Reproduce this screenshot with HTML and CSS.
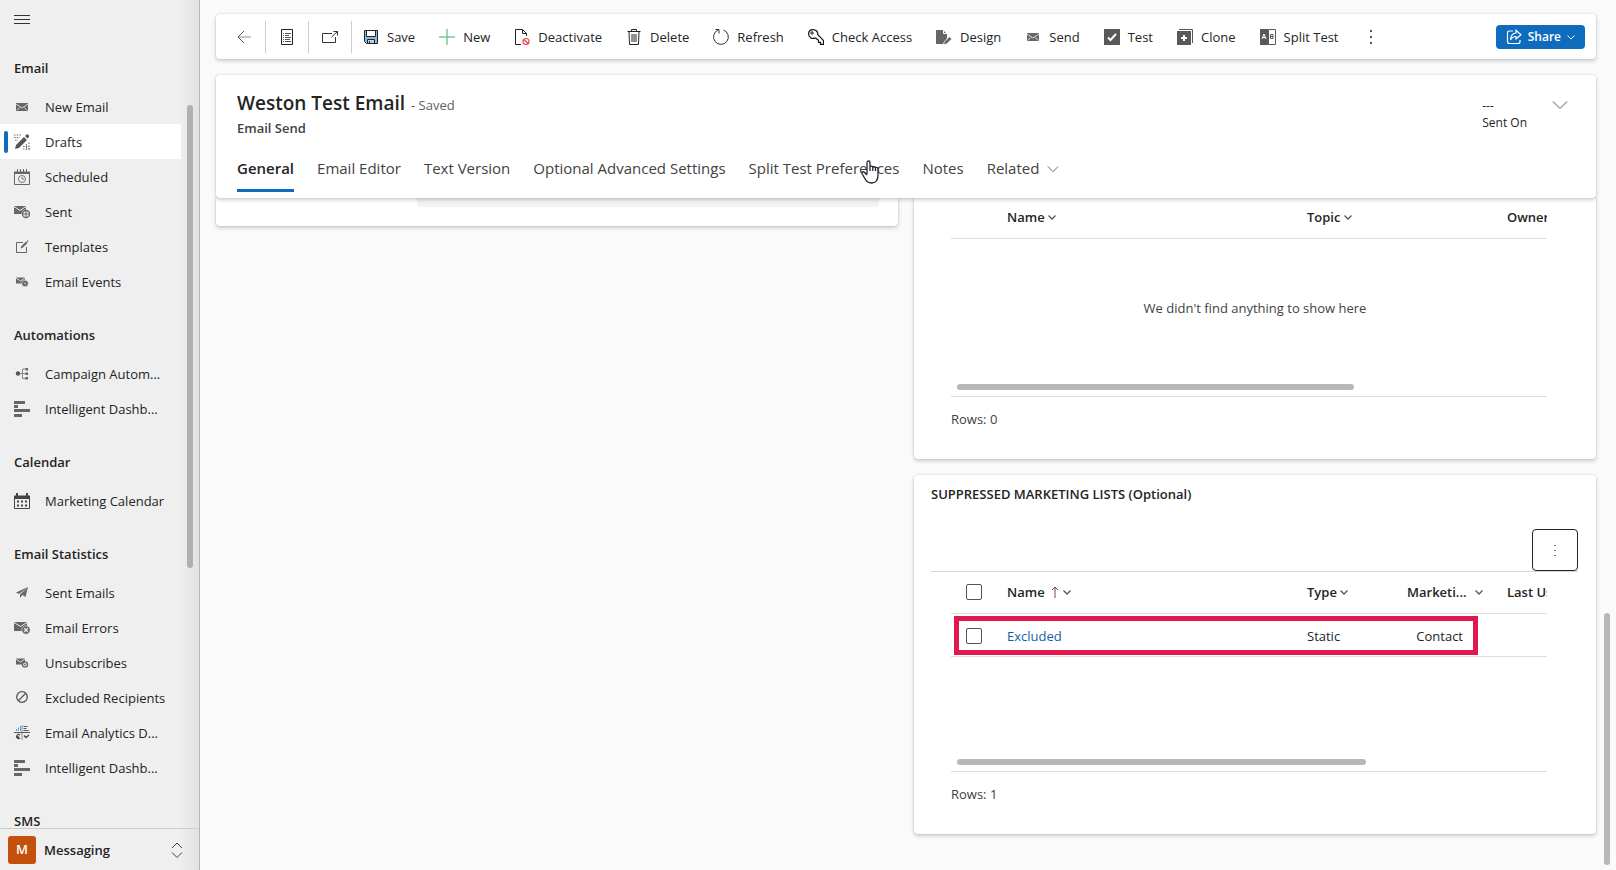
FILE: index.html
```html
<!DOCTYPE html>
<html lang="en">
<head>
  <meta charset="UTF-8">
  <meta name="viewport" content="width=device-width, initial-scale=1.0">
  <title>Weston Test Email - Email Send</title>
  <link rel="stylesheet" href="styles.css">
</head>
<body>
  <!-- Shared icons -->
  <svg class="sprite" aria-hidden="true">
    <symbol id="mail" viewBox="0 0 16 16">
      <path fill="#666" d="M2 4h12v8H2z"/>
      <path fill="none" stroke="#ddd" d="M2 5l6 4 6-4M3 11.500l2.500-3M13 11.500l-2.500-3"/>
    </symbol>
    <symbol id="bars" viewBox="0 0 16 16">
      <path fill="#666" d="M0 0h11v3H0zM0 4h4v3H0zM0 8h16v3H0zM0 13h8v3H0z"/>
    </symbol>
    <symbol id="chevron" viewBox="0 0 16 16">
      <path fill="none" stroke="currentColor" d="M1 4.500l7 7 7-7"/>
    </symbol>
    <symbol id="chevron-small" viewBox="0 0 8 8">
      <path fill="none" stroke="currentColor" d="M.5 2.500L4 6l3.500-3.500"/>
    </symbol>
    <symbol id="caret" viewBox="0 0 8 8">
      <path fill="none" stroke="#555" stroke-width="1.300" d="M.5 2.500L4 6l3.500-3.500"/>
    </symbol>
  </svg>

  <nav class="sidebar">
    <button class="menu-btn" aria-label="Menu">
      <svg class="icon" viewBox="0 0 16 16"><path stroke="#333" d="M0 3.500h16M0 7.500h16M0 11.500h16"/></svg>
    </button>

    <div class="nav-scroll">
      <h2>Email</h2>
      <a href="#"><svg class="icon"><use href="#mail"/></svg>New Email</a>
      <a href="#" class="active">
        <svg class="icon" viewBox="0 0 16 16">
          <path fill="#555" d="M1 15l1-4 8-8 3 3-8 8zM11 2l1.500-1.500c1-1 3.500 1.500 2.500 2.500L13.500 4.500z"/>
          <path stroke="#666" stroke-dasharray="1.500 1.200" d="M0 1h8M0 3.500h6M1 6h3M15 8.500v7M12.500 10v6M9 15h7M9 12.500h6"/>
        </svg>Drafts</a>
      <a href="#">
        <svg class="icon" viewBox="0 0 16 16">
          <path fill="none" stroke="#666" d="M.5 3v12.500h15V3"/>
          <path fill="#666" d="M0 2.500h16V5H0z"/>
          <path stroke="#666" d="M3.500 0v4M6.500 0v3M9.500 0v3M12.500 0v4"/>
          <circle cx="8" cy="10" r="3.500" fill="none" stroke="#777"/>
          <path fill="none" stroke="#777" d="M8 8v2h2"/>
        </svg>Scheduled</a>
      <a href="#">
        <svg class="icon" viewBox="0 0 16 16">
          <path fill="#666" d="M0 2h12v8H0z"/>
          <path fill="none" stroke="#eee" d="M0 2.500l6 4 6-4"/>
          <circle cx="12" cy="10" r="4.500" fill="#efefef"/>
          <circle cx="12" cy="10" r="3.500" fill="none" stroke="#666" stroke-width="1.300"/>
          <path stroke="#666" d="M9 10h6M12 7v6"/>
        </svg>Sent</a>
      <a href="#">
        <svg class="icon" viewBox="0 0 16 16">
          <path fill="none" stroke="#666" d="M9 3.500H2.500v10h10V8"/>
          <path fill="#666" d="M6.500 9.500l1-2.500 4.500-4.500 1.500 1.500L9 8.500zM12.500 2l1-.8 1 1-.8 1z"/>
        </svg>Templates</a>
      <a href="#">
        <svg class="icon" viewBox="0 0 16 16">
          <path fill="#666" d="M2 3.500h9v6H2z"/>
          <path fill="none" stroke="#ddd" d="M2 4l4.500 3L11 4"/>
          <circle cx="11" cy="9.500" r="3.300" fill="#666" stroke="#efefef" stroke-width=".6"/>
          <circle cx="11" cy="9.500" r="1" fill="#bbb"/>
        </svg>Email Events</a>

      <h2>Automations</h2>
      <a href="#">
        <svg class="icon" viewBox="0 0 16 16">
          <circle cx="4" cy="7.500" r="2.200" fill="#555"/>
          <path fill="none" stroke="#888" d="M6 7.500h6M12 3H8.500v9.500H12"/>
          <path fill="#666" d="M11.500 2H14v2.500h-2.500zM11.500 6.500H14V9h-2.500zM11.500 11H14v2.500h-2.500z"/>
        </svg>Campaign Autom...</a>
      <a href="#"><svg class="icon"><use href="#bars"/></svg>Intelligent Dashb...</a>

      <h2>Calendar</h2>
      <a href="#">
        <svg class="icon" viewBox="0 0 16 16">
          <path fill="#444" d="M0 2.500h16V6H0zM2 0h2v3H2zM12 0h2v3h-2z"/>
          <path fill="none" stroke="#444" d="M.5 5v10.500h15V5"/>
          <path fill="#444" d="M3 7.500h2v2H3zM7 7.500h2v2H7zM11 7.500h2v2h-2zM3 11.500h2v2H3zM7 11.500h2v2H7zM11 11.500h2v2h-2z"/>
        </svg>Marketing Calendar</a>

      <h2>Email Statistics</h2>
      <a href="#">
        <svg class="icon" viewBox="0 0 16 16">
          <path fill="#666" d="M14 2L2 7.500 5 9zM14 2L6 9.500V13l2-2.500zM14 2L8.500 10l3 2z"/>
        </svg>Sent Emails</a>
      <a href="#">
        <svg class="icon" viewBox="0 0 16 16">
          <path fill="#666" d="M0 2h13v9H0z"/>
          <path fill="none" stroke="#eee" d="M0 2.500l6.500 4 6.500-4"/>
          <circle cx="12" cy="10" r="4.200" fill="#666" stroke="#efefef" stroke-width=".6"/>
          <path stroke="#eee" stroke-width="1.300" d="M10.300 8.300l3.400 3.400M13.700 8.300l-3.400 3.400"/>
        </svg>Email Errors</a>
      <a href="#">
        <svg class="icon" viewBox="0 0 16 16">
          <path fill="#666" d="M2 3.500h9v6H2z"/>
          <path fill="none" stroke="#ddd" d="M2 4l4.500 3L11 4"/>
          <circle cx="11" cy="9.500" r="2.600" fill="#ddd" stroke="#666" stroke-width="1.200"/>
          <path stroke="#666" d="M10 8.500l2 2M12 8.500l-2 2"/>
        </svg>Unsubscribes</a>
      <a href="#">
        <svg class="icon" viewBox="0 0 16 16">
          <circle cx="8" cy="7" r="5.300" fill="none" stroke="#555" stroke-width="1.300"/>
          <path stroke="#555" stroke-width="1.300" d="M4.500 10.500l7-7"/>
        </svg>Excluded Recipients</a>
      <a href="#">
        <svg class="icon" viewBox="0 0 16 16">
          <path fill="#6aa0cc" d="M2 4h1v2H2zM4 2.500h1V6H4zM6 1h1v5H6zM7.500 0h1v15h-1z"/>
          <path stroke="#555" d="M9.500 1.500h4M9.500 3.500h3M9.500 5.500h5M0 7.500h16"/>
          <path fill="none" stroke="#444" stroke-width="1.300" d="M6 10a2 2 0 1 0 0 3M2 12h3M10 10.500l2 2 3-2.500"/>
        </svg>Email Analytics D...</a>
      <a href="#"><svg class="icon"><use href="#bars"/></svg>Intelligent Dashb...</a>

      <h2>SMS</h2>
    </div>
    <div class="nav-thumb"></div>

    <button class="area-switch">
      <span class="area-badge">M</span>
      <span class="area-name">Messaging</span>
      <svg class="icon" viewBox="0 0 16 16"><path fill="none" stroke="#444" d="M3 6l5-5 5 5M3 10.500l5 5 5-5"/></svg>
    </button>
  </nav>

  <main>
    <div class="toolbar">
      <button class="icon-btn" aria-label="Back">
        <svg class="icon" viewBox="0 0 16 16"><path fill="none" stroke="#a9a9b8" stroke-width="1.300" d="M2 8h13"/><path fill="none" stroke="#556" d="M8 2L2 8l6 6"/></svg>
      </button>
      <button class="icon-btn" aria-label="Form">
        <svg class="icon" viewBox="0 0 16 16"><path fill="none" stroke="#222" d="M2.500.5h11v15h-11z"/><path stroke="#555" d="M4 4.500h1M6 4.500h6M4 6.500h1M6 6.500h4M4 8.500h1M6 8.500h6M4 10.500h1M6 10.500h5M4 12.500h1M6 12.500h6"/></svg>
      </button>
      <button class="icon-btn" aria-label="Open in new window">
        <svg class="icon" viewBox="0 0 16 16"><path fill="none" stroke="#333" d="M10 4.500H.5v9h13V8M9.500 8l6-5.500M11.500 2.500h4v4"/></svg>
      </button>
      <button>
        <svg class="icon" viewBox="0 0 16 16"><path fill="#83bdea" stroke="#222" d="M1.500 1.500h13v13h-11l-2-2z"/><path fill="#fff" stroke="#222" d="M3.500 1.500h9v6h-9z"/><path fill="#ccc" stroke="#222" d="M4.500 10.500h7v4h-7zM6.500 12v2.500"/></svg>Save
      </button>
      <button>
        <svg class="icon" viewBox="0 0 16 16"><path stroke="#79c79a" stroke-width="1.500" d="M8 0v16M0 8h16"/></svg>New
      </button>
      <button>
        <svg class="icon" viewBox="0 0 16 16"><path fill="none" stroke="#222" d="M7 15.500H1.500V.500h7l4 4V7M8.500.500v4h4"/><circle cx="12" cy="12.500" r="3" fill="#fff" stroke="#e8474c" stroke-width="1.200"/><path stroke="#e8474c" stroke-width="1.200" d="M10 10.500l4 4"/></svg>Deactivate
      </button>
      <button>
        <svg class="icon" viewBox="0 0 16 16"><path fill="none" stroke="#222" d="M1.500 2.500h13M5.500 2.500v-2h5v2M3 2.500l.5 13h9l.5-13M6 5v8M8 5v8M10 5v8"/></svg>Delete
      </button>
      <button>
        <svg class="icon" viewBox="0 0 16 16"><path fill="none" stroke="#333" d="M10.500 1a7.400 7.400 0 1 1-5.600.200M2.500.500H6v4"/></svg>Refresh
      </button>
      <button>
        <svg class="icon" viewBox="0 0 16 16"><path fill="none" stroke="#111" stroke-width="1.200" d="M5 .600c3 0 5 2 4.800 5l5.700 6v3.800h-3v-2h-2v-2L7.500 9C3.500 10.500.6 8 .6 5S2.600.600 5 .600z"/><circle cx="4" cy="4" r="1.200" fill="none" stroke="#111"/></svg>Check Access
      </button>
      <button>
        <svg class="icon" viewBox="0 0 16 16"><path fill="#666" d="M0 1h7l4 4v4l-4 6H0z"/><path fill="none" stroke="#fff" d="M7.500 1v3.500H11"/><path fill="#666" stroke="#fff" stroke-width=".6" d="M7.500 15.500l.8-2.800 5.200-5L15.700 10l-5.200 5z"/></svg>Design
      </button>
      <button><svg class="icon"><use href="#mail"/></svg>Send</button>
      <button>
        <svg class="icon" viewBox="0 0 16 16"><path fill="#595959" d="M0 0h16v16H0z"/><path fill="none" stroke="#fff" stroke-width="2" d="M4 8.500l2.500 2.500L12 5"/></svg>Test
      </button>
      <button>
        <svg class="icon" viewBox="0 0 16 16"><path fill="#595959" d="M0 2h14v14H0z"/><path fill="none" stroke="#595959" d="M2 .500h13.500V14"/><path stroke="#fff" stroke-width="2" d="M7 6v6M4 9h6"/></svg>Clone
      </button>
      <button>
        <svg class="icon" viewBox="0 0 16 16"><path fill="#595959" d="M0 0h8v16H0z"/><path fill="#fff" stroke="#595959" d="M8.500.500h7v15h-7z"/><path fill="none" stroke="#fff" d="M2 10l2-5 2 5M2.500 8.500h3"/><path fill="none" stroke="#595959" d="M10.500 5.500v4H13V5.500zM10.500 7.500H13"/></svg>Split Test
      </button>
      <button class="more" aria-label="More commands">
        <svg class="icon" viewBox="0 0 16 16"><path fill="#555" d="M7 1h2v2H7zM7 7h2v2H7zM7 13h2v2H7z"/></svg>
      </button>
      <button class="share">
        <svg class="icon" viewBox="0 0 16 16"><path fill="none" stroke="#fff" stroke-width="1.200" d="M7 2H3.500Q1.500 2 1.500 4v8.500q0 2 2 2H12q2 0 2-2V11M10 1.200l5 4.500-5 4.300V7.500Q6.500 7.300 4.500 11 5 4.300 10 4z"/></svg>
        Share
        <svg class="chev-sm"><use href="#chevron-small"/></svg>
      </button>
    </div>

    <header class="record">
      <div class="record-top">
        <div>
          <div class="title-row">
            <h1>Weston Test Email</h1>
            <span class="saved">- Saved</span>
          </div>
          <p class="entity">Email Send</p>
        </div>
        <div class="record-side">
          <div class="field">
            <span class="field-value">---</span>
            <span class="field-label">Sent On</span>
          </div>
          <button class="expand" aria-label="Expand header"><svg class="icon"><use href="#chevron"/></svg></button>
        </div>
      </div>
      <div class="tabs">
        <button class="tab selected">General</button>
        <button class="tab">Email Editor</button>
        <button class="tab">Text Version</button>
        <button class="tab">Optional Advanced Settings</button>
        <button class="tab">Split Test Preferences
          <svg class="pointer" viewBox="0 0 18 24"><path fill="#fff" stroke="#223" stroke-width="1.300" stroke-linejoin="round" d="M6 14V2.500C6 .500 9 .500 9 2.500V7c0-1.200 2.800-1.200 2.800.500 0-1.200 2.700-1 2.700.700 0-1.200 2.500-1 2.500.800v6c0 5-2 8-6.500 8-4 0-5.500-2-7-5L1 13.500C.500 12 2.500 11 3.500 12.500L6 15M9 7v4M11.800 7.500V11M14.500 8.500V11"/></svg>
        </button>
        <button class="tab">Notes</button>
        <button class="tab">Related <svg class="chev-md"><use href="#chevron"/></svg></button>
      </div>
    </header>

    <div class="columns">
      <section class="card card-left">
        <div class="field-end"></div>
      </section>

      <div class="column">
        <section class="card card-cut">
          <div class="grid-wrap">
            <table>
              <colgroup><col class="c-check"><col class="c-name"><col class="c-wide"><col></colgroup>
              <thead>
                <tr>
                  <th></th>
                  <th>Name <svg class="caret"><use href="#caret"/></svg></th>
                  <th>Topic <svg class="caret"><use href="#caret"/></svg></th>
                  <th>Owner</th>
                </tr>
              </thead>
            </table>
            <p class="empty">We didn't find anything to show here</p>
            <div class="h-thumb" style="width: 66.600%"></div>
          </div>
          <p class="rows">Rows: 0</p>
        </section>

        <section class="card">
          <h3>SUPPRESSED MARKETING LISTS (Optional)</h3>
          <div class="grid-bar">
            <button aria-label="More commands for Marketing List">
              <svg class="icon" viewBox="0 0 16 16"><path fill="#678" d="M7 3h2v1H7zM7 8h2v1H7zM7 13h2v1H7z"/></svg>
            </button>
          </div>
          <div class="grid-wrap">
            <table>
              <colgroup><col class="c-check"><col class="c-name"><col class="c-slim"><col class="c-slim"><col></colgroup>
              <thead>
                <tr>
                  <th><input type="checkbox" aria-label="Select all rows"></th>
                  <th>Name <svg class="arrow" viewBox="0 0 8 12"><path fill="none" stroke="#745" d="M4 12V1M1 4l3-3 3 3"/></svg> <svg class="caret"><use href="#caret"/></svg></th>
                  <th>Type <svg class="caret"><use href="#caret"/></svg></th>
                  <th><span class="spread">Marketi... <svg class="caret"><use href="#caret"/></svg></span></th>
                  <th>Last Used</th>
                </tr>
              </thead>
              <tbody>
                <tr>
                  <td><input type="checkbox" aria-label="Select Excluded"></td>
                  <td><a href="#">Excluded</a></td>
                  <td>Static</td>
                  <td class="num">Contact</td>
                  <td></td>
                </tr>
              </tbody>
            </table>
            <div class="highlight"></div>
            <div class="h-thumb" style="width: 68.600%"></div>
          </div>
          <p class="rows">Rows: 1</p>
        </section>
      </div>
    </div>
    <div class="page-thumb"></div>
  </main>
</body>
</html>
```
FILE: styles.css
```css
* {
  box-sizing: border-box;
}
body {
  display: flex;
  height: 100vh;
  margin: 0;
  overflow: hidden;
  background: #fafafa;
  color: #242424;
  font-family: 'Segoe UI', 'Open Sans', sans-serif;
  font-size: 13px;
  line-height: 20px;
}
h1, h2, h3, p {
  margin: 0;
}
button {
  font: inherit;
  color: inherit;
  background: none;
  border: none;
  padding: 0;
  white-space: nowrap;
}
a {
  color: inherit;
  text-decoration: none;
}
.sprite {
  position: absolute;
  width: 0;
  height: 0;
}
.icon {
  width: 16px;
  height: 16px;
  flex: none;
}

/* Sidebar */
.sidebar {
  position: relative;
  display: flex;
  flex-direction: column;
  flex: none;
  width: 200px;
  background: linear-gradient(to right, #efefef 180px, #e2e2e2);
  border-right: 1px solid #b5b5b5;
}
.menu-btn {
  display: flex;
  height: 32px;
  padding: 12px 14px 4px;
}
.nav-scroll {
  flex: 1;
  min-height: 0;
  overflow: hidden;
}
.nav-scroll h2 {
  height: 57px;
  padding: 26px 14px 11px;
  font-size: 13px;
  font-weight: 600;
  line-height: 20px;
}
.nav-scroll a {
  display: flex;
  align-items: center;
  gap: 15px;
  height: 35px;
  width: 181px;
  padding-left: 14px;
  white-space: nowrap;
}
.nav-scroll a.active {
  background: #fff;
}
.nav-scroll a.active::before {
  content: "";
  width: 4px;
  height: 22px;
  margin: 0 -9px 0 -10px;
  border-radius: 2px;
  background: #0f6cbd;
}
.nav-thumb {
  position: absolute;
  top: 105px;
  right: 6px;
  width: 6px;
  height: 463px;
  border-radius: 3px;
  background: #b0b0b0;
}
.area-switch {
  display: flex;
  align-items: center;
  height: 42px;
  padding: 0 14px 0 8px;
  border-top: 1px solid #ccc;
  text-align: left;
}
.area-badge {
  width: 28px;
  height: 28px;
  border-radius: 3px;
  background: #c4500c;
  color: #fff;
  font-weight: 600;
  line-height: 26px;
  text-align: center;
}
.area-name {
  flex: 1;
  margin-left: 8px;
  font-weight: 600;
}

/* Main area */
main {
  position: relative;
  display: flex;
  flex-direction: column;
  flex: 1;
  min-width: 0;
  padding: 14px 20px 0 16px;
}
.toolbar, .record, .card {
  background: #fff;
  border-radius: 4px;
  box-shadow: 0 0 2px rgba(0,0,0,0.16), 0 2px 4px rgba(0,0,0,0.18);
}
.toolbar {
  display: flex;
  align-items: center;
  gap: 24px;
  flex: none;
  height: 45px;
  margin-bottom: 16px;
  padding: 0 11px 0 7px;
}
.toolbar button {
  display: flex;
  align-items: center;
  gap: 8px;
}
.toolbar .icon-btn {
  width: 43px;
  height: 32px;
  margin-right: -24px;
  justify-content: center;
  border-right: 1px solid #ccc;
}
.toolbar .icon-btn + button:not(.icon-btn) {
  margin-left: 11px;
}
.toolbar .share {
  gap: 6px;
  height: 24px;
  margin-left: auto;
  padding: 0 10px;
  border-radius: 4px;
  background: #0f6cbd;
  color: #fff;
  font-size: 12px;
  font-weight: 600;
}
.chev-sm {
  width: 8px;
  height: 8px;
}
.chev-md {
  width: 12px;
  height: 12px;
  margin-left: 4px;
  vertical-align: -1px;
}

/* Record header */
.record {
  position: relative;
  z-index: 1;
  flex: none;
  height: 123px;
  padding: 14px 20px 6px 21px;
}
.record-top {
  display: flex;
  justify-content: space-between;
  height: 59px;
}
.title-row {
  display: flex;
  align-items: baseline;
  gap: 6px;
}
h1 {
  font-size: 19px;
  font-weight: 600;
  line-height: 28px;
}
.saved {
  color: #616161;
}
.entity {
  margin-top: 1px;
  color: #424242;
  font-weight: 600;
}
.record-side {
  display: flex;
  gap: 25px;
  padding: 8px 8px 0 0;
}
.field {
  display: flex;
  flex-direction: column;
  font-size: 12px;
  line-height: 17px;
}
.expand {
  display: flex;
  height: 16px;
  color: #555;
}
.tabs {
  display: flex;
  gap: 23px;
  color: #424242;
  font-size: 15px;
}
.tab {
  position: relative;
  height: 44px;
  padding-bottom: 4px;
}
.tab.selected {
  padding-bottom: 1px;
  border-bottom: 3px solid #0f6cbd;
  color: #242424;
  font-weight: 600;
}
.pointer {
  position: absolute;
  top: 12px;
  right: 20px;
  width: 18px;
  height: 24px;
}

/* Form sections */
.columns {
  display: grid;
  grid-template-columns: 1fr 1fr;
  gap: 16px;
  align-items: start;
}
.column {
  display: flex;
  flex-direction: column;
  gap: 16px;
  min-width: 0;
}
.card {
  padding: 8px 18px 30px 17px;
}
.card-left {
  padding: 0 19px 19px;
  border-radius: 0 0 4px 4px;
}
.field-end {
  height: 9px;
  margin-left: 182px;
  border-radius: 0 0 4px 4px;
  background: #f3f3f3;
}
.card-cut {
  padding-top: 0;
  border-radius: 0 0 4px 4px;
}
h3 {
  padding-top: 1px;
  font-size: 13px;
  font-weight: 600;
  line-height: 20px;
}
.grid-bar {
  display: flex;
  justify-content: flex-end;
  margin-top: 25px;
  border-bottom: 1px solid #d6d6d6;
}
.grid-bar button {
  display: flex;
  align-items: center;
  justify-content: center;
  width: 46px;
  height: 42px;
  border: 1px solid #242424;
  border-radius: 4px;
}
.grid-wrap {
  position: relative;
  display: flex;
  flex-direction: column;
  height: 200px;
  margin: 0 31px 0 20px;
  overflow: hidden;
  border-bottom: 1px solid #dedede;
}
.card-cut .grid-wrap {
  height: 199px;
}
table {
  width: 744px;
  table-layout: fixed;
  border-collapse: collapse;
}
.c-check {
  width: 44px;
}
.c-name {
  width: 300px;
}
.c-wide {
  width: 200px;
}
.c-slim {
  width: 100px;
}
th, td {
  padding: 0 12px;
  border-bottom: 1px solid #dedede;
  text-align: left;
  white-space: nowrap;
}
th {
  height: 41px;
  font-weight: 600;
}
td {
  height: 43px;
  padding-top: 2px;
}
.card-cut th {
  height: 40px;
  padding-bottom: 2px;
}
td a {
  color: #115ea3;
}
td.num {
  padding-right: 32px;
  text-align: right;
}
.spread {
  display: flex;
  align-items: center;
  justify-content: space-between;
}
.caret {
  width: 8px;
  height: 8px;
  vertical-align: 1px;
}
.arrow {
  width: 8px;
  height: 12px;
  margin: 0 1px 0 3px;
  vertical-align: -1px;
}
input[type="checkbox"] {
  display: block;
  appearance: none;
  width: 16px;
  height: 16px;
  margin: 0 0 0 3px;
  border: 1px solid #555;
  border-radius: 2px;
  background: #fff;
}
.empty {
  margin-top: 59px;
  padding-left: 12px;
  color: #424242;
  text-align: center;
}
.h-thumb {
  height: 6px;
  margin: auto 0 6px 6px;
  border-radius: 3px;
  background: #b8b8b8;
}
.rows {
  margin: 12px 20px 0;
  color: #424242;
}
.highlight {
  position: absolute;
  top: 44px;
  left: 3px;
  width: 524px;
  height: 39px;
  border: 5px solid #e3174f;
}
.page-thumb {
  position: absolute;
  right: 6px;
  bottom: 5px;
  width: 6px;
  height: 252px;
  border-radius: 3px;
  background: #b8b8b8;
}
```
